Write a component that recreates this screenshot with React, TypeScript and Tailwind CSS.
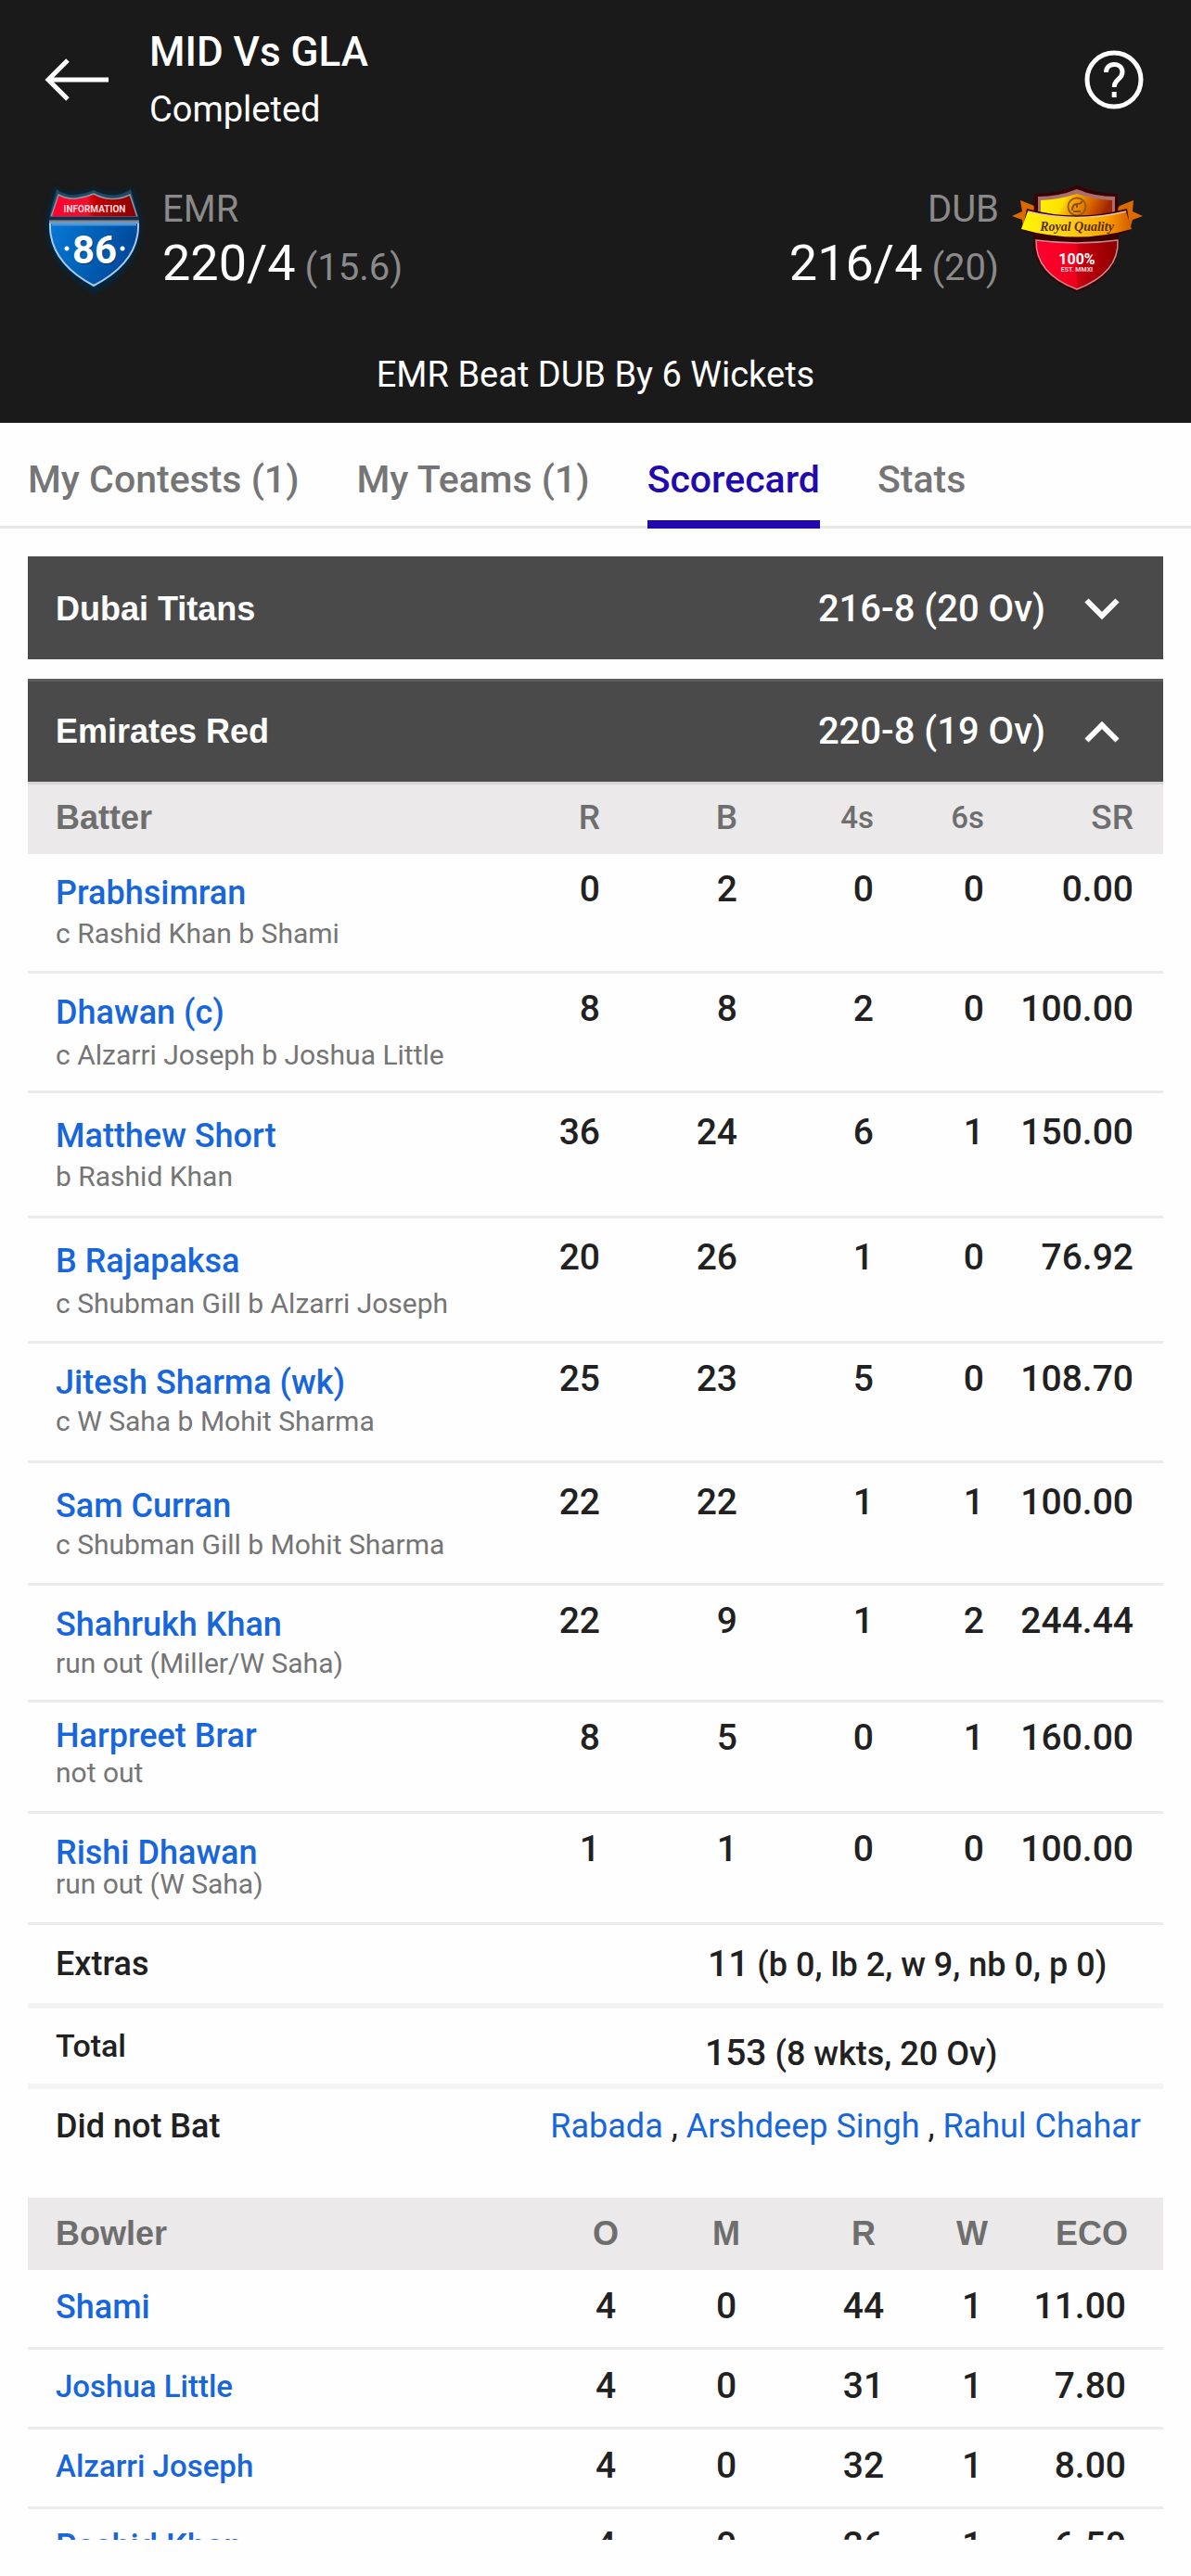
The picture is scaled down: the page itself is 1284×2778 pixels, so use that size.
import { useState } from "react";

type Batter = {
  name: string;
  how: string;
  figures: string[];
  height: string;
  nameTop: string;
  figureTop: string;
  howLeading: string;
};

const batters: Batter[] = [
  { name: "Prabhsimran", how: "c Rashid Khan b Shami", figures: ["0", "2", "0", "0", "0.00"], height: "h-[129px]", nameTop: "pt-5", figureTop: "pt-4", howLeading: "leading-[44px]" },
  { name: "Dhawan (c)", how: "c Alzarri Joseph b Joshua Little", figures: ["8", "8", "2", "0", "100.00"], height: "h-[129px]", nameTop: "pt-5", figureTop: "pt-4", howLeading: "leading-[48px]" },
  { name: "Matthew Short", how: "b Rashid Khan", figures: ["36", "24", "6", "1", "150.00"], height: "h-[135px]", nameTop: "pt-6", figureTop: "pt-5", howLeading: "leading-[44px]" },
  { name: "B Rajapaksa", how: "c Shubman Gill b Alzarri Joseph", figures: ["20", "26", "1", "0", "76.92"], height: "h-[135px]", nameTop: "pt-6", figureTop: "pt-5", howLeading: "leading-[48px]" },
  { name: "Jitesh Sharma (wk)", how: "c W Saha b Mohit Sharma", figures: ["25", "23", "5", "0", "108.70"], height: "h-[129px]", nameTop: "pt-5", figureTop: "pt-4", howLeading: "leading-[40px]" },
  { name: "Sam Curran", how: "c Shubman Gill b Mohit Sharma", figures: ["22", "22", "1", "1", "100.00"], height: "h-[132px]", nameTop: "pt-6", figureTop: "pt-5", howLeading: "leading-[40px]" },
  { name: "Shahrukh Khan", how: "run out (Miller/W Saha)", figures: ["22", "9", "1", "2", "244.44"], height: "h-[126px]", nameTop: "pt-5", figureTop: "pt-4", howLeading: "leading-[40px]" },
  { name: "Harpreet Brar", how: "not out", figures: ["8", "5", "0", "1", "160.00"], height: "h-[120px]", nameTop: "pt-3.5", figureTop: "pt-4", howLeading: "leading-[36px]" },
  { name: "Rishi Dhawan", how: "run out (W Saha)", figures: ["1", "1", "0", "0", "100.00"], height: "h-[120px]", nameTop: "pt-5", figureTop: "pt-4", howLeading: "leading-[24px]" },
];

const bowlers = [
  { name: "Shami", size: "text-[36px]", figures: ["4", "0", "44", "1", "11.00"] },
  { name: "Joshua Little", size: "text-[33px]", figures: ["4", "0", "31", "1", "7.80"] },
  { name: "Alzarri Joseph", size: "text-[33px]", figures: ["4", "0", "32", "1", "8.00"] },
  { name: "Rashid Khan", size: "text-[36px]", figures: ["4", "0", "26", "1", "6.50"] },
];

const tabs = ["My Contests (1)", "My Teams (1)", "Scorecard", "Stats"];

function BackArrow() {
  return (
    <svg width="72" height="48" viewBox="0 0 72 48" fill="none" stroke="#fff" strokeWidth="5" aria-hidden="true">
      <path d="M70 24H5" />
      <path d="M26 3 5 24l21 21" />
    </svg>
  );
}

function HelpIcon() {
  return (
    <svg width="64" height="64" viewBox="0 0 64 64" fill="none" stroke="#fff" strokeWidth="5" aria-hidden="true">
      <circle cx="32" cy="32" r="29" />
      <path d="M23.500 24c0-5 3.500-8.500 8.700-8.500s8.800 3.300 8.800 8.200c0 7.800-8.800 7.700-8.800 16.300" />
      <path d="M32.200 45v6" />
    </svg>
  );
}

function RoadShield() {
  return (
    <svg width="110" height="120" viewBox="5 8 110 120" aria-hidden="true" className="shrink-0">
      <defs>
        <linearGradient id="roadRed" x1="0" x2="1">
          <stop offset="0" stopColor="#ff0030" />
          <stop offset="0.42" stopColor="#f2102a" />
          <stop offset="0.5" stopColor="#c40000" />
          <stop offset="1" stopColor="#850000" />
        </linearGradient>
        <linearGradient id="roadBlue" x1="0" x2="1" y2="0.3">
          <stop offset="0" stopColor="#0a78d6" />
          <stop offset="0.5" stopColor="#0062b8" />
          <stop offset="1" stopColor="#00489a" />
        </linearGradient>
        <filter id="roadGlow" x="-20%" y="-20%" width="140%" height="140%">
          <feGaussianBlur stdDeviation="2.5" />
        </filter>
      </defs>
      <path d="M19 12q10 7 21 6t21-5q10 5 21 5.500T103 12l9 32q5 52-50 82Q6 96 10 44Z" fill="#02263f" filter="url(#roadGlow)" />
      <path d="M21 14q9 7 20 6t20-5q10 5 20 5.500T101 14l8 30q4 48-48 74Q10 92 13 44Z" fill="#24465f" />
      <path d="M23 20q9 5 19 4t19-5q9 5 19 5.500T100 20l8 24H15Z" fill="url(#roadRed)" stroke="#8b98a6" strokeWidth="1.500" />
      <path d="M14 50h95q2 42-48 68Q12 92 14 50Z" fill="url(#roadBlue)" stroke="#a9c8e6" strokeWidth="2" />
      <path d="M13 45.500h97" stroke="#182a48" strokeWidth="4" />
      <path d="M13 49h97" stroke="#7f8b99" strokeWidth="3" />
      <path d="M16 52h91" stroke="#4796dc" strokeWidth="3" />
      <text x="62" y="39" textAnchor="middle" fontFamily="Roboto, sans-serif" fontSize="10" fontWeight="700" fill="#ffd9de">INFORMATION</text>
      <text x="63" y="95" textAnchor="middle" fontFamily="Roboto, sans-serif" fontSize="42" fontWeight="700" fill="#063a73">86</text>
      <text x="62" y="94" textAnchor="middle" fontFamily="Roboto, sans-serif" fontSize="42" fontWeight="700" fill="#fff">86</text>
      <circle cx="32" cy="78" r="2.500" fill="#fff" />
      <circle cx="92" cy="78" r="2.500" fill="#fff" />
    </svg>
  );
}

function QualityCrest() {
  return (
    <svg width="145" height="120" viewBox="10 8 145 120" aria-hidden="true" className="shrink-0">
      <defs>
        <linearGradient id="goldPanel" x1="0" x2="1" y2="0.2">
          <stop offset="0" stopColor="#fff200" />
          <stop offset="0.35" stopColor="#ffe100" />
          <stop offset="0.5" stopColor="#f5a300" />
          <stop offset="0.75" stopColor="#d86400" />
          <stop offset="1" stopColor="#a02400" />
        </linearGradient>
        <linearGradient id="goldRibbon" x1="0" x2="1">
          <stop offset="0" stopColor="#fff700" />
          <stop offset="0.4" stopColor="#ffd21a" />
          <stop offset="0.75" stopColor="#ffa800" />
          <stop offset="1" stopColor="#d45a00" />
        </linearGradient>
        <linearGradient id="crestRed" x1="0" x2="1">
          <stop offset="0" stopColor="#ff0030" />
          <stop offset="0.49" stopColor="#f0001c" />
          <stop offset="0.51" stopColor="#c90010" />
          <stop offset="1" stopColor="#8a0000" />
        </linearGradient>
      </defs>
      <path d="M12 43l11-5-2-12 15 6 6 8v14H24l-1-7Z" fill="#dd6a00" />
      <path d="M153 43l-11-5 1-12-15 6-6 8v14h18l2-7Z" fill="#dd6a00" />
      <path d="M36 19q26 0 46-9 20 9 44 9l1 48q3 40-45 58-48-18-47-56Z" fill="#3b0004" />
      <path d="M40 22q23 0 42-8 19 8 41 8v24H40Z" fill="#a8706a" />
      <path d="M43 26q21-1 39-7 19 6 38 7v20q-38 6-77 0Z" fill="url(#goldPanel)" />
      <circle cx="82" cy="33" r="9.500" fill="none" stroke="#9a5a00" strokeWidth="2" />
      <path d="M77 37q0-7 5-7t5-3m-9 11h8m-4-8v4" fill="none" stroke="#8a4c00" strokeWidth="2" />
      <path d="M28 35q54 15 108 0l4 24q-60 17-117 0Z" fill="#3b0004" />
      <path d="M29 38q53 13 106 0l6 19q-59 17-119 0Z" fill="url(#goldRibbon)" />
      <path d="M29 38q53 13 106 0" fill="none" stroke="#e8c9a0" strokeWidth="1.500" />
      <text x="82" y="59" textAnchor="middle" fontFamily="Liberation Serif, serif" fontSize="14" fontStyle="italic" fontWeight="700" fill="#5a2a00">Royal Quality</text>
      <path d="M38 69q44 6 88 0 2 35-44 53Q37 105 38 69Z" fill="url(#crestRed)" stroke="#c98a90" strokeWidth="1.500" />
      <text x="82" y="95" textAnchor="middle" fontFamily="Roboto, sans-serif" fontSize="16" fontWeight="700" fill="#fff">100%</text>
      <text x="82" y="103" textAnchor="middle" fontFamily="Roboto, sans-serif" fontSize="7" fontWeight="700" fill="#ffd9dc">EST. MMXI</text>
    </svg>
  );
}

function Chevron({ up }: { up: boolean }) {
  return (
    <svg width="38" height="24" viewBox="0 0 38 24" fill="none" stroke="#fff" strokeWidth="6" aria-hidden="true">
      <path d={up ? "M2.500 21.500 19 5l16.500 16.500" : "M2.500 2.500 19 19 35.500 2.500"} />
    </svg>
  );
}

function InningsButton({ team, score, open, onClick }: { team: string; score: string; open: boolean; onClick: () => void }) {
  return (
    <button
      type="button"
      aria-expanded={open}
      onClick={onClick}
      className="flex h-[111px] w-full items-center bg-[#4a4a4a] pt-0.5 pr-[47px] pl-[30px] text-white aria-expanded:shadow-[inset_0_3px_0_#5c5c5c]"
    >
      <span className="font-['Liberation_Sans',sans-serif] text-[36px] leading-[44px] font-bold">{team}</span>
      <span className="mr-[42px] ml-auto text-[40px] leading-[44px] font-medium">{score}</span>
      <Chevron up={open} />
    </button>
  );
}

export default function App() {
  const [tab, setTab] = useState("Scorecard");
  const [open, setOpen] = useState("Emirates Red");
  const toggle = (team: string) => setOpen(open === team ? "" : team);

  return (
    <div className="flex h-screen flex-col bg-[#fefefe] font-['Roboto',sans-serif] text-[#212121]">
      <header className="bg-[#1a1a1a] pt-[30px] pb-7 text-white">
        <div className="flex items-center pr-[51px] pl-[47px]">
          <button type="button" aria-label="Back">
            <BackArrow />
          </button>
          <div className="ml-[42px]">
            <h1 className="text-[44px] leading-[52px] font-medium">MID Vs GLA</h1>
            <p className="mt-3 text-[38px] leading-[48px]">Completed</p>
          </div>
          <button type="button" aria-label="Help" className="ml-auto">
            <HelpIcon />
          </button>
        </div>

        <div className="mt-14 flex items-center justify-between pr-[50px] pl-[45px]">
          <div className="flex items-center gap-5">
            <RoadShield />
            <div>
              <p className="text-[40px] leading-[52px] text-[#8a8a8a]">EMR</p>
              <p className="text-[54px] leading-[64px]">
                220/4<span className="text-[40px] leading-[52px] text-[#8a8a8a]"> (15.6)</span>
              </p>
            </div>
          </div>
          <div className="flex items-center gap-3 text-right">
            <div>
              <p className="text-[40px] leading-[52px] text-[#8a8a8a]">DUB</p>
              <p className="text-[54px] leading-[64px]">
                216/4<span className="text-[40px] leading-[52px] text-[#8a8a8a]"> (20)</span>
              </p>
            </div>
            <QualityCrest />
          </div>
        </div>

        <p className="mt-[62px] text-center text-[38px] leading-[48px]">EMR Beat DUB By 6 Wickets</p>
      </header>

      <nav className="flex gap-[62px] border-b-3 border-[#e6e6e6] px-[30px] pt-[37px]">
        {tabs.map((t) => (
          <button
            key={t}
            type="button"
            onClick={() => setTab(t)}
            aria-current={t === tab ? "page" : undefined}
            className={`-mb-[3px] border-b-9 pb-5 text-[41px] leading-[48px] font-medium ${t === tab ? "border-[#2209ad] text-[#2209ad]" : "border-transparent text-[#757575]"}`}
          >
            {t}
          </button>
        ))}
      </nav>

      <main className="min-h-0 flex-1 overflow-y-auto px-[30px] pt-[30px] [scrollbar-width:none]">
        <InningsButton team="Dubai Titans" score="216-8 (20 Ov)" open={open === "Dubai Titans"} onClick={() => toggle("Dubai Titans")} />
        <div className="mt-[21px]">
          <InningsButton team="Emirates Red" score="220-8 (19 Ov)" open={open === "Emirates Red"} onClick={() => toggle("Emirates Red")} />
        </div>

        {open === "Emirates Red" && (
          <>
            <table className="w-full table-fixed border-collapse text-right">
              <colgroup>
                <col />
                <col className="w-[147px]" />
                <col className="w-[148px]" />
                <col className="w-[147px]" />
                <col className="w-[119px]" />
                <col className="w-[193px]" />
              </colgroup>
              <thead>
                <tr className="h-[78px] bg-[#ebe9ea] text-[37px] leading-[44px] text-[#6e6e6e] shadow-[inset_0_3px_0_#d8d3d7]">
                  <th scope="col" className="pl-[30px] text-left font-['Liberation_Sans',sans-serif] text-[36px] font-bold">Batter</th>
                  <th scope="col" className="font-medium">R</th>
                  <th scope="col" className="font-medium">B</th>
                  <th scope="col" className="text-[33px] font-medium">4s</th>
                  <th scope="col" className="text-[33px] font-medium">6s</th>
                  <th scope="col" className="pr-8 font-medium">SR</th>
                </tr>
              </thead>
              <tbody>
                {batters.map((b) => (
                  <tr key={b.name} className={`${b.height} align-top shadow-[inset_0_-3px_0_#ebebeb]`}>
                    <th scope="row" className={`${b.nameTop} pl-[30px] text-left font-normal whitespace-nowrap`}>
                      <a href="#" className="block text-[36px] leading-[44px] font-medium text-[#1766dc]">{b.name}</a>
                      <span className={`${b.howLeading} block text-[30px] text-[#757575]`}>{b.how}</span>
                    </th>
                    {b.figures.map((f, i) => (
                      <td key={i} className={`${b.figureTop} text-[39px] leading-[44px] font-medium last:pr-8`}>{f}</td>
                    ))}
                  </tr>
                ))}
              </tbody>
            </table>

            <dl className="text-[36px] leading-[44px] font-medium">
              <div className="grid h-[90px] grid-cols-[1fr_491px] items-center border-b-6 border-[#f4f4f4] pl-[30px]">
                <dt>Extras</dt>
                <dd><span className="text-[39px]">11</span> (b 0, lb 2, w 9, nb 0, p 0)</dd>
              </div>
              <div className="grid h-[87px] grid-cols-[1fr_494px] items-start border-b-6 border-[#f4f4f4] pt-[18px] pl-[30px]">
                <dt className="text-[34px]">Total</dt>
                <dd className="pt-2"><span className="text-[39px]">153</span> (8 wkts, 20 Ov)</dd>
              </div>
              <div className="flex h-[117px] items-start justify-between pt-[18px] pr-6 pl-[30px]">
                <dt>Did not Bat</dt>
                <dd className="font-normal">
                  <a href="#" className="text-[#1766dc]">Rabada</a> , <a href="#" className="text-[#1766dc]">Arshdeep Singh</a> , <a href="#" className="text-[#1766dc]">Rahul Chahar</a>
                </dd>
              </div>
            </dl>

            <table className="w-full table-fixed border-collapse text-center">
              <colgroup>
                <col />
                <col className="w-[130px]" />
                <col className="w-[130px]" />
                <col className="w-[166px]" />
                <col className="w-[68px]" />
                <col className="w-[172px]" />
              </colgroup>
              <thead>
                <tr className="h-[78px] bg-[#ebe9ea] font-['Liberation_Sans',sans-serif] text-[36px] leading-[44px] text-[#6e6e6e]">
                  <th scope="col" className="pl-[30px] text-left font-bold">Bowler</th>
                  <th scope="col" className="font-bold">O</th>
                  <th scope="col" className="font-bold">M</th>
                  <th scope="col" className="font-bold">R</th>
                  <th scope="col" className="font-bold">W</th>
                  <th scope="col" className="pr-[38px] text-right font-bold">ECO</th>
                </tr>
              </thead>
              <tbody>
                {bowlers.map((b) => (
                  <tr key={b.name} className="h-[86px] align-top shadow-[inset_0_-3px_0_#ebebeb]">
                    <th scope="row" className="pt-[18px] pl-[30px] text-left">
                      <a href="#" className={`${b.size} block leading-[44px] font-medium text-[#1766dc]`}>{b.name}</a>
                    </th>
                    {b.figures.map((f, i) => (
                      <td key={i} className="pt-[17px] text-[39px] leading-[44px] font-medium last:pr-10 last:text-right">{f}</td>
                    ))}
                  </tr>
                ))}
              </tbody>
            </table>
          </>
        )}
      </main>

      <div className="h-[39px] shrink-0" />
    </div>
  );
}
